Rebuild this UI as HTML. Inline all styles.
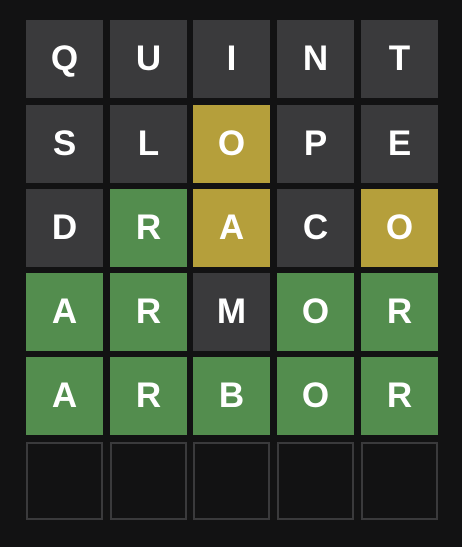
<!DOCTYPE html>
<html><head><style>
html,body{margin:0;padding:0;background:#121213;width:462px;height:547px;overflow:hidden}
.t{position:absolute;width:77px;height:78px;display:flex;align-items:center;justify-content:center;font-family:"Liberation Sans",sans-serif;font-weight:bold;font-size:35px;color:#fff;box-sizing:border-box}
.d{background:#3a3a3c}.y{background:#b59f3b}.g{background:#538d4e}.e{border:2px solid #3a3a3c}
</style></head><body>
<div id="b"></div>
<script>
const rows=[["QUINT","ddddd"],["SLOPE","ddydd"],["DRACO","dgydy"],["ARMOR","ggdgg"],["ARBOR","ggggg"],["     ","eeeee"]];
const xs=[26,110,193,277,361],ys=[20,105,189,273,357,442];
let h="";
rows.forEach((r,i)=>{for(let j=0;j<5;j++){h+=`<div class="t ${r[1][j]}" style="left:${xs[j]}px;top:${ys[i]}px">${r[0][j].trim()}</div>`}});
document.getElementById("b").innerHTML=h;
</script>
</body></html>
